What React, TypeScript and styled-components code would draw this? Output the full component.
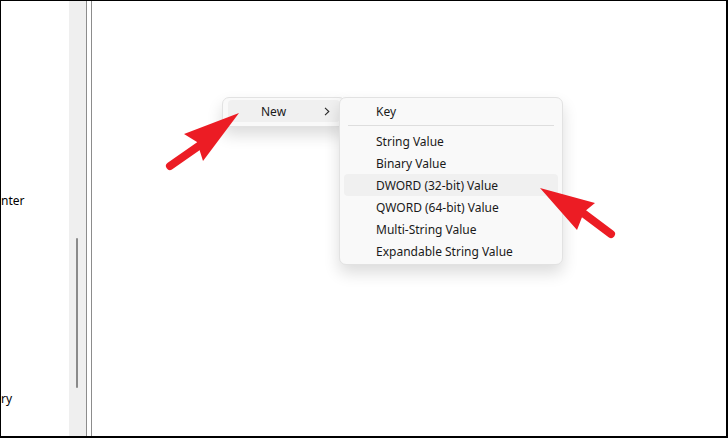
import { type JSX } from 'react';

import styled, { createGlobalStyle } from 'styled-components';

const GlobalStyle = createGlobalStyle`
  html, body {
    margin: 0;
    padding: 0;
    background: #ffffff;
  }
`;

const newItems = ['String Value', 'Binary Value', 'DWORD (32-bit) Value', 'QWORD (64-bit) Value', 'Multi-String Value', 'Expandable String Value'];

const App = (): JSX.Element => {
  return (
    <>
      <GlobalStyle />
      <StyledWindow>
        <StyledTreePane>
          <StyledTreeLabel top={192}>nter</StyledTreeLabel>
          <StyledTreeLabel top={182}>ry</StyledTreeLabel>
        </StyledTreePane>
        <StyledScrollTrack>
          <StyledScrollThumb />
        </StyledScrollTrack>
        <StyledSplitter />
        <StyledValuePane />

        <StyledParentMenu>
          <StyledMenuItem
            isActive
            indent={33}
          >
            <span>New</span>
            <StyledChevron
              viewBox="0 0 6 9"
              width={6}
              height={9}
            >
              <polyline
                points="1,0.8 4.8,4.5 1,8.2"
                fill="none"
                stroke="#2b2b2b"
                strokeWidth={1.1}
              />
            </StyledChevron>
          </StyledMenuItem>
        </StyledParentMenu>

        <StyledSubMenu>
          <StyledMenuItem indent={32}>Key</StyledMenuItem>
          <StyledSeparator />
          {newItems.map((label) => (
            <StyledMenuItem
              key={label}
              indent={32}
              isActive={label.startsWith('DWORD')}
            >
              {label}
            </StyledMenuItem>
          ))}
        </StyledSubMenu>

        <StyledArrows
          viewBox="0 0 728 438"
          width={728}
          height={438}
        >
          {/* arrow pointing at "New" */}
          <line
            x1={170}
            y1={166}
            x2={203}
            y2={143}
            stroke="#ec1c24"
            strokeWidth={8}
            strokeLinecap="round"
          />
          <polygon
            points="239,113 184,134 197,142 203,161"
            fill="#ec1c24"
          />
          {/* arrow pointing at DWORD */}
          <line
            x1={611}
            y1={234}
            x2={583}
            y2={213}
            stroke="#ec1c24"
            strokeWidth={8}
            strokeLinecap="round"
          />
          <polygon
            points="540,188 595,203 584,212 577,230"
            fill="#ec1c24"
          />
        </StyledArrows>
      </StyledWindow>
    </>
  );
};

App.displayName = 'App';

export default App;

const StyledWindow = styled.div`
  position: relative;
  box-sizing: border-box;
  display: flex;
  width: 728px;
  height: 438px;
  border-top: 1px solid #000000;
  border-left: 1px solid #000000;
  border-right: 2px solid #000000;
  border-bottom: 2px solid #000000;
  background: #ffffff;
  overflow: hidden;
  font-family: 'Segoe UI', 'Noto Sans', 'Open Sans', sans-serif;
  font-size: 12px;
  color: #1a1a1a;
`;

const StyledTreePane = styled.div`
  display: flex;
  flex-direction: column;
  width: 68px;
  flex-shrink: 0;
  overflow: hidden;
`;

const StyledTreeLabel = styled.div<{ top: number }>`
  margin-top: ${({ top }) => top}px;
  height: 16px;
  line-height: 16px;
  white-space: nowrap;
  color: #000000;
`;

const StyledScrollTrack = styled.div`
  width: 17px;
  flex-shrink: 0;
  background: #efefef;
  padding: 237px 0 0 7px;
  box-sizing: border-box;
`;

const StyledScrollThumb = styled.div`
  width: 2px;
  height: 150px;
  border-radius: 1px;
  background: #8a8a8a;
`;

const StyledSplitter = styled.div`
  width: 4px;
  flex-shrink: 0;
  border-left: 1px solid #8c8c8c;
  border-right: 1px solid #8c8c8c;
`;

const StyledValuePane = styled.div`
  flex: 1;
  background: #ffffff;
`;

const StyledMenuBase = styled.div`
  position: absolute;
  box-sizing: border-box;
  display: flex;
  flex-direction: column;
  background: #f9f9f9;
  border: 1px solid #e2e2e2;
  border-radius: 7px;
  box-shadow: 0 8px 16px rgba(0, 0, 0, 0.14);
`;

const StyledParentMenu = styled(StyledMenuBase)`
  left: 221px;
  top: 96px;
  width: 124px;
  height: 30px;
  padding: 2px 5px;
`;

const StyledSubMenu = styled(StyledMenuBase)`
  left: 338px;
  top: 96px;
  width: 224px;
  height: 168px;
  padding: 2px 4px 1px 4px;
`;

const StyledMenuItem = styled.div<{ indent: number; isActive?: boolean }>`
  display: flex;
  align-items: center;
  justify-content: space-between;
  height: 22px;
  padding-left: ${({ indent }) => indent}px;
  padding-right: 10px;
  border-radius: 4px;
  background: ${({ isActive }) => (isActive ? '#f0f0f0' : 'transparent')};
  white-space: nowrap;
`;

const StyledChevron = styled.svg`
  display: block;
`;

const StyledSeparator = styled.div`
  height: 1px;
  margin: 3px 4px 4px 4px;
  background: #dedede;
`;

const StyledArrows = styled.svg`
  position: absolute;
  left: -1px;
  top: -1px;
  pointer-events: none;
`;
